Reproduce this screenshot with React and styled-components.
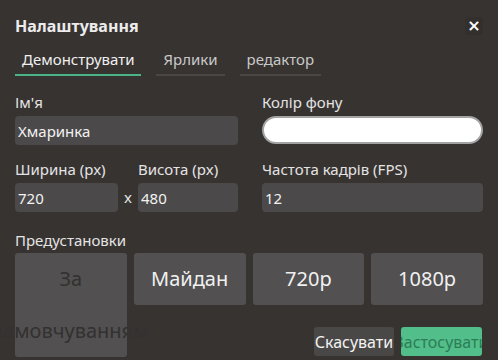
import React from 'react'
import styled, { createGlobalStyle } from 'styled-components'

const GlobalStyle = createGlobalStyle`
  html, body {
    margin: 0;
    padding: 0;
    background: #373331;
  }
  body {
    font-family: 'Noto Sans', 'Open Sans', sans-serif;
  }
`

const presets = [
  { label: 'За замовчуванням', muted: true },
  { label: 'Майдан' },
  { label: '720p' },
  { label: '1080p' },
]

export default function App() {
  return (
    <Dialog>
      <GlobalStyle />
      <Header>
        <Title>Налаштування</Title>
        <CloseButton>×</CloseButton>
      </Header>

      <Tabs>
        <Tab active>Демонструвати</Tab>
        <Tab>Ярлики</Tab>
        <Tab>редактор</Tab>
      </Tabs>

      <FormGrid>
        <Field>
          <Label>Ім'я</Label>
          <Input defaultValue="Хмаринка" />
        </Field>
        <Field>
          <Label>Колір фону</Label>
          <ColorInput />
        </Field>

        <SizeRow>
          <Field>
            <Label>Ширина (px)</Label>
            <Input defaultValue="720" />
          </Field>
          <Times>x</Times>
          <Field>
            <Label>Висота (px)</Label>
            <Input defaultValue="480" />
          </Field>
        </SizeRow>
        <Field>
          <Label>Частота кадрів (FPS)</Label>
          <Input defaultValue="12" />
        </Field>
      </FormGrid>

      <PresetsLabel>Предустановки</PresetsLabel>
      <Presets>
        {presets.map((p) => (
          <Preset key={p.label} muted={p.muted}>
            <PresetText>{p.label}</PresetText>
          </Preset>
        ))}
      </Presets>

      <Footer>
        <Button>Скасувати</Button>
        <Button primary>Застосувати</Button>
      </Footer>
    </Dialog>
  )
}

const Dialog = styled.div`
  width: 498px;
  height: 360px;
  box-sizing: border-box;
  padding: 12px 15px 0 15px;
  background: #373331;
  color: #e6e6e6;
  overflow: hidden;
`

const Header = styled.div`
  display: flex;
  align-items: center;
  justify-content: space-between;
  height: 28px;
`

const Title = styled.h1`
  margin: 0;
  font-size: 16px;
  font-weight: 700;
  color: #ececec;
`

const CloseButton = styled.button`
  width: 18px;
  height: 18px;
  padding: 0;
  border: none;
  border-radius: 3px;
  background: #322f2d;
  color: #fff;
  font-size: 16px;
  font-weight: 700;
  line-height: 16px;
  font-family: 'DejaVu Sans', sans-serif;
`

const Tabs = styled.div`
  display: flex;
  gap: 15px;
  margin-top: 7px;
`

const Tab = styled.div`
  padding: 2px 7px 5px;
  font-size: 15px;
  line-height: 20px;
  color: ${(p) => (p.active ? '#f0f0f0' : '#c9c9c9')};
  border-bottom: 2px solid ${(p) => (p.active ? '#4cb386' : '#4a4847')};
`

const FormGrid = styled.div`
  display: grid;
  grid-template-columns: 223px 221px;
  column-gap: 24px;
  row-gap: 14px;
  margin-top: 16px;
`

const Field = styled.div`
  display: flex;
  flex-direction: column;
  gap: 4px;
  min-width: 0;
`

const Label = styled.div`
  font-size: 15px;
  color: #e4e4e4;
  line-height: 20px;
`

const PresetsLabel = styled(Label)`
  margin-top: 18px;
`

const Input = styled.input`
  box-sizing: border-box;
  width: 100%;
  height: 29px;
  padding: 0 3px;
  border: none;
  border-radius: 4px;
  background: #4b4949;
  color: #f2f2f2;
  font-family: inherit;
  font-size: 15px;
  outline: none;
`

const ColorInput = styled.div`
  box-sizing: border-box;
  height: 28px;
  border: 2px solid #a3a3a3;
  border-radius: 14px;
  background: #ffffff;
`

const SizeRow = styled.div`
  display: grid;
  grid-template-columns: 103px 20px 100px;
  align-items: end;
`

const Times = styled.div`
  text-align: center;
  font-size: 15px;
  line-height: 29px;
  color: #e4e4e4;
`

const Presets = styled.div`
  display: grid;
  grid-template-columns: repeat(4, minmax(0, 1fr));
  gap: 7px;
  height: 52px;
  margin-top: 3px;
  align-items: start;
`

const Preset = styled.div`
  display: flex;
  flex-direction: column;
  align-items: center;
  min-height: 52px;
  border-radius: 3px;
  background: #525050;
  color: ${(p) => (p.muted ? '#333131' : '#f0f0f0')};
  font-size: 20px;
  line-height: 52px;
`

const PresetText = styled.span`
  width: min-content;
  text-align: center;
`

const Footer = styled.div`
  display: flex;
  justify-content: flex-end;
  gap: 7px;
  margin-top: 22px;
  padding-right: 1px;
`

const Button = styled.button`
  width: ${(p) => (p.primary ? '81px' : '80px')};
  height: 29px;
  padding: 0;
  border: none;
  border-radius: 3px;
  overflow: hidden;
  white-space: nowrap;
  display: flex;
  justify-content: center;
  align-items: center;
  background: ${(p) => (p.primary ? '#52bf8a' : '#4a4847')};
  color: ${(p) => (p.primary ? '#2c7d55' : '#f2f2f2')};
  font-family: inherit;
  font-size: 16px;
`
